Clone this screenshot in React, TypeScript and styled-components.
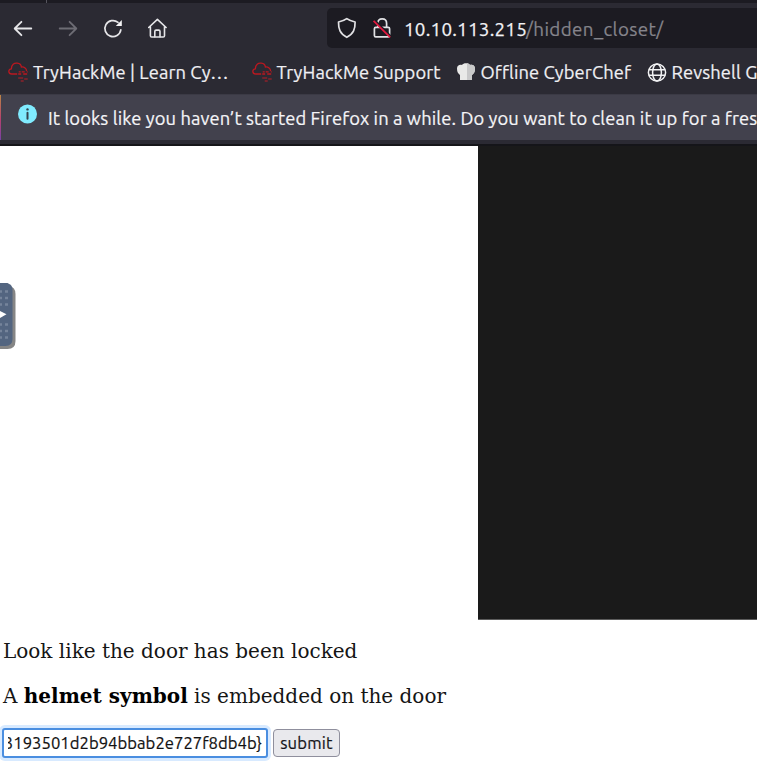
import React from "react";
import styled, { createGlobalStyle } from "styled-components";

const Global = createGlobalStyle`
  * { box-sizing: border-box; }
  html, body { margin: 0; background: #fff; overflow: hidden; }
  svg { display: block; flex: none; }
`;

const ui = `Ubuntu, "Noto Sans", "Open Sans", sans-serif`;

const Browser = styled.div`
  position: relative;
  width: 757px;
  height: 770px;
  overflow: hidden;
  background: #fff;
  font-family: ${ui};
`;

const TabStrip = styled.div`
  height: 3px;
  background: #1c1b22;
  padding-left: 46px;
  &::before {
    content: "";
    display: block;
    width: 1px;
    height: 3px;
    background: #55545d;
  }
`;

const Toolbar = styled.div`
  height: 46px;
  padding: 5px 0 1px 13px;
  display: flex;
  align-items: center;
  background: #2b2a33;
`;

const Navigation = styled.div`
  display: flex;
  gap: 25px;
  width: 314px;
`;

const AddressBar = styled.div`
  flex: 1;
  height: 40px;
  display: flex;
  align-items: center;
  gap: 13px;
  padding-left: 9px;
  background: #1c1b22;
  border-radius: 5px 0 0 5px;
`;

const Address = styled.div`
  margin-left: -2px;
  padding-top: 1px;
  display: flex;
  white-space: nowrap;
  font-size: 18.8px;
  line-height: 26px;
  color: #f2f2f5;
`;

const Host = styled.span`
  width: 122px;
  letter-spacing: 0.25px;
  -webkit-text-stroke: 0.25px;
`;

const Path = styled.span`
  color: #85848b;
  letter-spacing: 0.37px;
  -webkit-text-stroke: 0.2px;
`;

const Bookmarks = styled.div`
  height: 45px;
  background: #2b2a33;
  display: flex;
  align-items: center;
  padding-left: 8px;
`;

const Bookmark = styled.div<{ $width: number }>`
  flex: none;
  width: ${(p) => p.$width}px;
  display: flex;
  align-items: center;
  gap: 5px;
  white-space: nowrap;
  color: #f0f0f4;
  font-size: 18.33px;
  line-height: 26px;
  letter-spacing: 0.1px;
  -webkit-text-stroke: 0.2px;
`;

const Notice = styled.div`
  position: relative;
  height: 46px;
  background: #42414d;
  border-top: 1px solid #3b3a45;
  display: flex;
  align-items: center;
  gap: 11px;
  padding-left: 18px;
  &::before {
    content: "";
    position: absolute;
    left: 0;
    top: 0;
    width: 1px;
    height: 45px;
    background: linear-gradient(#b98545, #b5416f 55%, #7542a5);
  }
  svg { margin-top: -7px; }
`;

const NoticeText = styled.div`
  white-space: nowrap;
  color: #f5f5f8;
  font-size: 18.33px;
  line-height: 26px;
  letter-spacing: 0.11px;
  -webkit-text-stroke: 0.2px;
`;

const ChromeEdge = styled.div`
  height: 6px;
  background: #2b2a33;
  border-bottom: 2px solid #151519;
`;

const DoorImage = styled.div`
  margin-left: 478px;
  height: 474px;
  background: #1a1a1a;
  border-bottom: 1px solid #5c5c5c;
`;

const Paragraph = styled.p`
  margin: 0;
  height: 45px;
  padding-left: 3px;
  white-space: nowrap;
  color: #151515;
  font: 20px/24px "DejaVu Serif", serif;
  b { color: #000; }
`;

const Story = styled.div`
  padding-top: 19px;
`;

const Form = styled.form`
  display: flex;
  align-items: center;
  gap: 5px;
  padding-left: 2px;
  margin-top: -1px;
`;

const Answer = styled.div`
  width: 266px;
  height: 30px;
  border: 2px solid #4a8ee0;
  border-radius: 3px;
  box-shadow: 0 0 0 3px #d8eaff;
  padding: 0 4px;
  background: #fff;
`;

const AnswerValue = styled.div`
  overflow: hidden;
  display: flex;
  justify-content: flex-end;
  white-space: nowrap;
  font-size: 16.67px;
  line-height: 25px;
  letter-spacing: 0.02px;
  color: #111;
  -webkit-text-stroke: 0.2px;
`;

const Submit = styled.button`
  width: 67px;
  height: 28px;
  padding: 0 0 1px;
  border: 1px solid #8f8f9d;
  border-radius: 4px;
  background: #e9e9ed;
  color: #15151a;
  font: 16.67px/24px ${ui};
  letter-spacing: 0.2px;
  -webkit-text-stroke: 0.2px;
`;

const SideHandle = styled.div`
  position: absolute;
  left: 0;
  top: 283px;
`;

const Cloud = () => (
  <svg width="20" height="20" viewBox="0.8 0 20 20" fill="none" stroke="#ba1820" strokeWidth="1.3">
    <path d="M10 12H4.500C1 12 .5 7.300 4.200 6.800 4.200 2.700 7 .8 10 1.200c2.400.300 4 1.700 4.200 3.800 3-.3 5.100 1.500 5.200 4" />
    <path d="M11.500 9.800h2m1 0h3m2 0h1M11 12h3m2 0h4" />
    <path d="M11 16h5m1 1h3.500M13.500 19h3" stroke="#8c222b" />
  </svg>
);

export default function App() {
  return (
    <>
      <Global />
      <Browser>
        <TabStrip />
        <Toolbar>
          <Navigation>
            <svg width="20" height="22" viewBox="0 -1 20 22" fill="none" stroke="#e6e6e9" strokeWidth="1.8" strokeLinecap="round" strokeLinejoin="round">
              <path d="M18.3 10.5H2M8.4 3.8 1.7 10.5l6.7 6.7" />
            </svg>
            <svg width="20" height="22" viewBox="0 -1 20 22" fill="none" stroke="#6d6c74" strokeWidth="1.8" strokeLinecap="round" strokeLinejoin="round">
              <path d="M1.700 10.500H18M11.600 3.800l6.700 6.700-6.700 6.700" />
            </svg>
            <svg width="20" height="22" viewBox="0 -1 20 22" fill="none" stroke="#e6e6e9" strokeWidth="1.7" strokeLinecap="round">
              <path d="M15 4.400A8 8 0 1 0 17.800 11.800" />
              <path d="M18.800 2v6h-6z" fill="#f4f4f6" stroke="none" />
            </svg>
            <svg width="20" height="22" viewBox="0 -1 20 22" fill="none" stroke="#e6e6e9" strokeWidth="1.6" strokeLinecap="round" strokeLinejoin="round">
              <path d="M.7 9.500 9.400 1.400l8.700 8.100M2.400 8.700v9q0 1.300 1.300 1.300h11.500q1.300 0 1.300-1.300v-9" />
              <path d="M6.800 18.700v-5.200q0-1.400 1.300-1.400h2.600q1.300 0 1.300 1.400v5.200" />
            </svg>
          </Navigation>
          <AddressBar>
            <svg width="22" height="22" viewBox="0 0 22 22" fill="none" stroke="#e1e1e4" strokeWidth="1.7" strokeLinejoin="round">
              <path d="M10.8 1.7c2.2 1.7 4.8 2.6 8.3 3.3.1 7.1-1.4 11.6-8.3 15.3C3.900 16.600 2.400 12.100 2.500 5c3.500-.7 6.100-1.600 8.300-3.300Z" />
            </svg>
            <svg width="22" height="22" viewBox="0 0 22 22" fill="none">
              <path d="M6.800 9.800V6.500q0-4.700 4.400-4.700T15.600 6.500v3.300M4.800 10.300h12.400q1.400 0 1.400 1.400v6.800q0 1.400-1.400 1.400H4.800q-1.400 0-1.400-1.400v-6.800q0-1.400 1.400-1.400Z" stroke="#e1e1e4" strokeWidth="1.7" />
              <path d="M3.700 3.400 19.800 19.500" stroke="#1c1b22" strokeWidth="2.2" />
              <path d="M2.600 3.800 19.200 20.400" stroke="#e2193f" strokeWidth="1.8" />
            </svg>
            <Address>
              <Host>10.10.113.215</Host>
              <Path>/hidden_closet/</Path>
            </Address>
          </AddressBar>
        </Toolbar>
        <Bookmarks>
          <Bookmark $width={243.500}><Cloud />TryHackMe | Learn Cy…</Bookmark>
          <Bookmark $width={204}><Cloud />TryHackMe Support</Bookmark>
          <Bookmark $width={191}>
            <svg width="20" height="20" viewBox="0 0 20 20">
              <path d="M4 18v-5Q1 11 1 6.500C1 3.500 3.800 2.200 6 3.100 7.200.5 12.800.5 14 3.100c2.600-1 5 .8 5 3.400q0 4.500-3 6.500v5Z" fill="#e9e9e8" />
              <path d="M11 1.300c1.500.1 2.700.9 3 1.800 2.600-1 5 .8 5 3.400q0 4.500-3 6.500v5h-5Z" fill="#c9c9ca" />
            </svg>
            Offline CyberChef
          </Bookmark>
          <Bookmark $width={120}>
            <svg width="20" height="20" viewBox="0 0 20 20" fill="none" stroke="#f2f2f4" strokeWidth="1.5">
              <circle cx="10" cy="10.500" r="8.600" />
              <ellipse cx="10" cy="10.500" rx="4.400" ry="8.600" />
              <path d="M1.900 7.700h16.200M1.900 13.300h16.200" />
            </svg>
            Revshell G
          </Bookmark>
        </Bookmarks>
        <Notice>
          <svg width="19" height="20" viewBox="0 0 19 20">
            <circle cx="9.500" cy="10" r="9.500" fill="#80ebff" />
            <path d="M9.500 8.700v6" stroke="#34434f" strokeWidth="2" strokeLinecap="round" />
            <circle cx="9.500" cy="5.400" r="1.200" fill="#34434f" />
          </svg>
          <NoticeText>It looks like you haven’t started Firefox in a while. Do you want to clean it up for a fres</NoticeText>
        </Notice>
        <ChromeEdge />
        <DoorImage />
        <Story>
          <Paragraph>Look like the door has been locked</Paragraph>
          <Paragraph>A <b>helmet symbol</b> is embedded on the door</Paragraph>
          <Form>
            <Answer><AnswerValue>3193501d2b94bbab2e727f8db4b&#125;</AnswerValue></Answer>
            <Submit type="button">submit</Submit>
          </Form>
        </Story>
        <SideHandle>
          <svg width="16" height="67" viewBox="0 0 16 67">
            <path d="M0 3h9q6.500 1 6.500 8v47q0 8-8 8H0Z" fill="#858585" />
            <path d="M0 0h7.500q5 2 5 6v50q0 7-7 7H0Z" fill="#536580" />
            <path d="M0 28 6.500 31.300 0 35Z" fill="#fff" />
            <path d="M0 8.500h2m3 0h3M0 15h2m3 0h3M0 21.500h2m3 0h3M0 41.500h2m3 0h3M0 48h2m3 0h3M0 54.500h2m3 0h3" stroke="#75849b" strokeWidth="2.500" />
          </svg>
        </SideHandle>
      </Browser>
    </>
  );
}
